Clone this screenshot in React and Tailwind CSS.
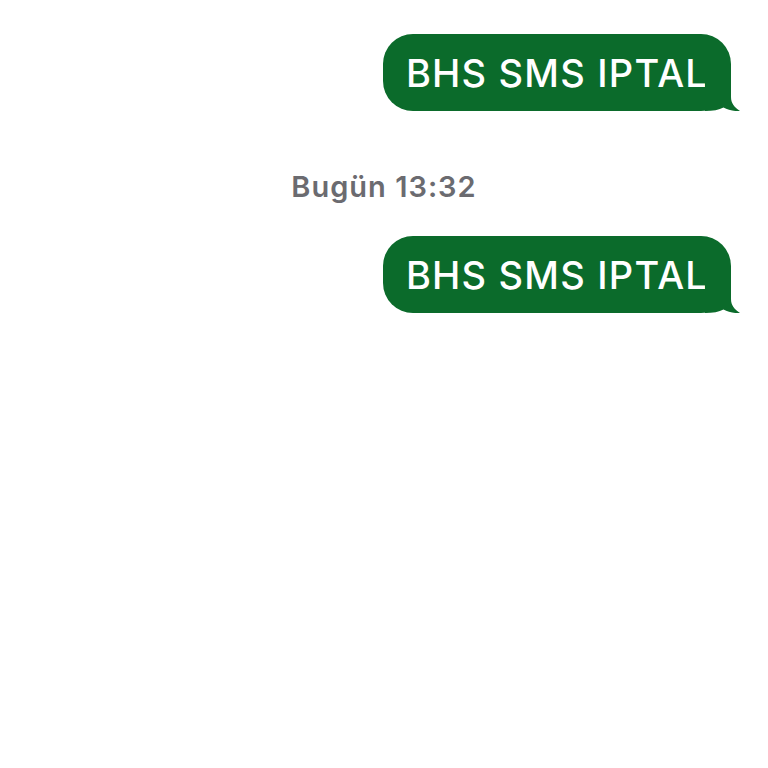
import React from "react";

function Bubble({ children }) {
  return (
    <div className="relative h-[77px] rounded-[30px] bg-[#0b6b2b] pl-[23px] pr-[23px] flex items-center">
      <span
        className="text-white text-[38px] font-medium leading-none tracking-[1.2px] whitespace-nowrap relative top-[0px]"
        style={{ fontFamily: 'Inter, "Liberation Sans", Arial, sans-serif' }}
      >
        {children}
      </span>
      <svg
        className="absolute right-[-9px] bottom-0"
        width="35"
        height="30"
        viewBox="0 0 35 30"
      >
        <path
          d="M0 0 H26 V16 C26 22 29 26 35 30 C29 30.5 23 29 18.5 26.5 C14 29 8 30 0 30 Z"
          fill="#0b6b2b"
        />
      </svg>
    </div>
  );
}

export default function App() {
  return (
    <div className="w-[768px] h-[768px] bg-white flex flex-col">
      <div className="flex justify-end pr-[37px] pt-[34px]">
        <Bubble>BHS SMS IPTAL</Bubble>
      </div>
      <div
        className="mt-[59px] h-[33px] flex justify-center items-center text-[29px] font-semibold tracking-[1px] text-[#6b6b70] leading-none"
        style={{ fontFamily: 'Inter, "Liberation Sans", Arial, sans-serif' }}
      >
        Bugün 13:32
      </div>
      <div className="flex justify-end pr-[37px] mt-[33px]">
        <Bubble>BHS SMS IPTAL</Bubble>
      </div>
    </div>
  );
}
